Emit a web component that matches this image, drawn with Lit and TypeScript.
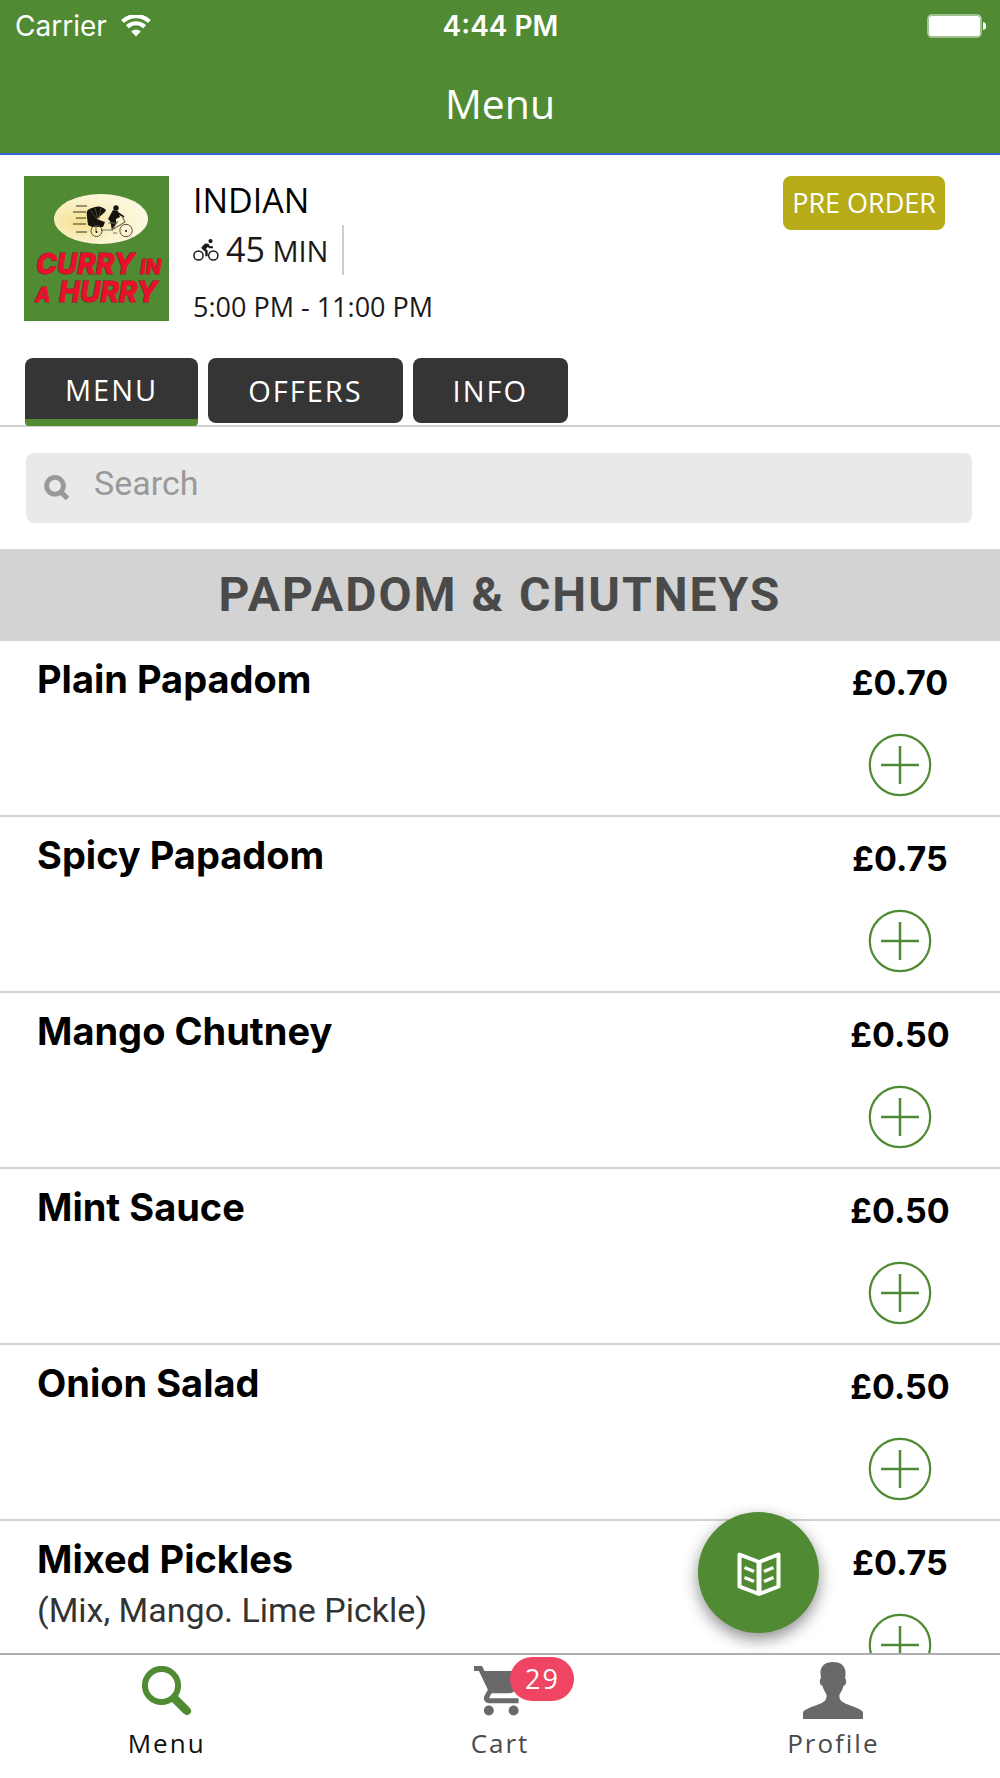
import { LitElement, html, css, svg, nothing } from "lit";
import { customElement, property, state } from "lit/decorators.js";

interface Dish {
  name: string;
  price: string;
  note?: string;
}

const dishes: Dish[] = [
  { name: "Plain Papadom", price: "£0.70" },
  { name: "Spicy Papadom", price: "£0.75" },
  { name: "Mango Chutney", price: "£0.50" },
  { name: "Mint Sauce", price: "£0.50" },
  { name: "Onion Salad", price: "£0.50" },
  { name: "Mixed Pickles", price: "£0.75", note: "(Mix, Mango. Lime Pickle)" },
];

@customElement("status-bar")
class StatusBar extends LitElement {
  static styles = css`
    :host {
      display: grid;
      grid-template-columns: 1fr auto 1fr;
      align-items: center;
      height: 51px;
      padding: 0 14px 0 15px;
      color: #fff;
      font-family: Inter, sans-serif;
      font-size: 28px;
      line-height: 34px;
    }
    .carrier {
      display: flex;
      align-items: center;
      gap: 14px;
    }
    .time {
      font-weight: 600;
    }
    .battery {
      justify-self: end;
    }
    svg {
      display: block;
    }
  `;

  render() {
    return html`
      <div class="carrier">
        <span>Carrier</span>
        <svg width="30" height="22" viewBox="0 0 30 22" aria-hidden="true">
          <path d="M1.600 6.600A19 19 0 0 1 28.400 6.600" fill="none" stroke="#fff" stroke-width="4.200" />
          <path d="M6.400 11.800A12.200 12.200 0 0 1 23.600 11.800" fill="none" stroke="#fff" stroke-width="4.200" />
          <path d="M10.200 16.400Q15 12.600 19.800 16.400L15 21.600Z" fill="#fff" />
        </svg>
      </div>
      <span class="time">4:44 PM</span>
      <svg class="battery" width="59" height="24" viewBox="0 0 59 24" aria-hidden="true">
        <rect x="1" y="1" width="53" height="22" rx="4" fill="none" stroke="#fff" stroke-opacity=".6" stroke-width="1.6" />
        <rect x="2" y="2" width="51" height="20" rx="2.500" fill="#fff" />
        <path d="M56 8Q59.400 8.800 59.400 12Q59.400 15.200 56 16Z" fill="#fff" />
      </svg>
    `;
  }
}

@customElement("restaurant-logo")
class RestaurantLogo extends LitElement {
  static styles = css`
    :host {
      display: block;
    }
    svg {
      display: block;
    }
    .word {
      font-family: Inter, sans-serif;
      font-weight: 800;
      font-style: italic;
      fill: #ea0f2c;
      stroke: #8f1a1c;
      stroke-width: 1px;
      paint-order: stroke;
    }
    .big {
      font-size: 28px;
    }
    .small {
      font-size: 20px;
    }
  `;

  render() {
    return html`
      <svg width="145" height="145" viewBox="0 0 145 145" role="img" aria-label="Curry in a Hurry">
        <defs>
          <radialGradient id="glow" cx=".28" cy=".55" r=".8">
            <stop offset="0" stop-color="#f3e08e" />
            <stop offset=".55" stop-color="#fbf3cf" />
            <stop offset="1" stop-color="#fdfae6" />
          </radialGradient>
        </defs>
        <rect width="145" height="145" fill="#508b33" />
        <ellipse cx="77" cy="43" rx="47" ry="25" fill="url(#glow)" />
        <path d="M52 30H63M49 36H62M52 42H62M49 48H62M52 56H63" stroke="#3b3524" stroke-width="1.2" />
        <path d="M63 41Q61 33 68 32Q76 28 82 34L81 36L73 43L78 45L81 46L79 51H68L64 49Z" fill="#15130f" />
        <path d="M66 34L73 43M71 32L74 43M77 32L75 43" stroke="#6f674c" stroke-width=".6" />
        <circle cx="92" cy="32" r="2.700" fill="#15130f" />
        <path d="M89 34L94 35L96 41L92 43L92 48L88 55L87 49L86 45L84 43Z" fill="#15130f" />
        <path d="M94 37L100 41" stroke="#15130f" stroke-width="1.6" />
        <path d="M77 54H88L101 46L98 40M88 54L94 45M72 50V56M84 47H91M89 57H93" fill="none" stroke="#77715c" stroke-width="1.2" />
        <g fill="none" stroke="#57523f" stroke-width="1">
          <circle cx="72.500" cy="55" r="5.500" />
          <circle cx="102" cy="54.500" r="6.200" />
        </g>
        <circle cx="72.500" cy="56" r="1" fill="#15130f" />
        <circle cx="102" cy="55" r="1" fill="#15130f" />
        <text class="word big" x="12" y="98">CURRY</text>
        <text class="word small" x="116" y="98">IN</text>
        <text class="word small" x="11" y="126">A</text>
        <text class="word big" x="35" y="126">HURRY</text>
      </svg>
    `;
  }
}

@customElement("restaurant-card")
class RestaurantCard extends LitElement {
  static styles = css`
    :host {
      display: flex;
      align-items: flex-start;
      gap: 24px;
      padding: 21px 55px 0 24px;
      font-family: "Open Sans", sans-serif;
      color: #1a1a1a;
    }
    .facts {
      flex: 1;
      display: flex;
      flex-direction: column;
      align-items: flex-start;
      height: 151px;
    }
    .cuisine {
      font-size: 34px;
      line-height: 49px;
      color: #000;
    }
    .delivery {
      display: flex;
      align-items: center;
      gap: 7px;
      height: 50px;
      padding-right: 14px;
      border-right: 2px solid #ccc;
      font-size: 29px;
      line-height: 46px;
    }
    .minutes {
      font-size: 34px;
    }
    .hours {
      margin-top: 12px;
      font-size: 27px;
      line-height: 40px;
    }
    .preorder {
      border: 0;
      border-radius: 8px;
      padding: 0 9px;
      background: #b7ac17;
      color: #fff;
      font: 27px/54px "Open Sans", sans-serif;
    }
  `;

  render() {
    return html`
      <restaurant-logo></restaurant-logo>
      <div class="facts">
        <span class="cuisine">INDIAN</span>
        <div class="delivery">
          <svg width="26" height="22" viewBox="0 0 26 22" aria-hidden="true">
            <g fill="none" stroke="#1a1a1a">
              <circle cx="5.500" cy="16.500" r="4.600" stroke-width="1.500" />
              <circle cx="20.300" cy="16.500" r="4.600" stroke-width="1.500" />
              <path d="M15 5.200L9.700 8.800L13.500 12.200V17.200" stroke-width="2.400" stroke-linejoin="round" />
              <path d="M14.500 5.200L16.500 8.300H20" stroke-width="2" />
              <path d="M14 5.800L11 8.800" stroke-width="4.400" />
            </g>
            <circle cx="17.500" cy="2.100" r="2.100" fill="#1a1a1a" />
          </svg>
          <span><span class="minutes">45</span> MIN</span>
        </div>
        <span class="hours">5:00 PM - 11:00 PM</span>
      </div>
      <button class="preorder" type="button">PRE ORDER</button>
    `;
  }
}

@customElement("section-tabs")
class SectionTabs extends LitElement {
  static styles = css`
    :host {
      display: block;
      padding: 31px 25px 0;
      border-bottom: 2px solid #d0d0d0;
    }
    .tabs {
      display: flex;
      align-items: flex-start;
      gap: 10px;
      height: 67px;
    }
    .tab {
      border: 0;
      border-radius: 8px;
      padding: 0 40px;
      background: #353535;
      color: #fff;
      font: 29px/65px "Open Sans", sans-serif;
      letter-spacing: 2px;
    }
    .tab.current {
      border-bottom: 7px solid #508b33;
      border-radius: 8px 8px 4px 4px;
      line-height: 60px;
      padding-top: 2px;
      height: 68px;
    }
  `;

  @state() current = "MENU";

  render() {
    return html`
      <nav class="tabs">
        ${["MENU", "OFFERS", "INFO"].map(
          (name) => html`<button
            type="button"
            class="tab ${name === this.current ? "current" : ""}"
            @click=${() => (this.current = name)}
          >${name}</button>`
        )}
      </nav>
    `;
  }
}

@customElement("search-box")
class SearchBox extends LitElement {
  static styles = css`
    :host {
      display: block;
      padding: 26px 28px 26px 26px;
    }
    .field {
      display: flex;
      align-items: center;
      gap: 24px;
      height: 70px;
      padding: 0 18px;
      border-radius: 8px;
      background: #e9e9e9;
    }
    .icon {
      flex: none;
    }
    .input {
      flex: 1;
      min-width: 0;
      height: 70px;
      box-sizing: border-box;
      border: 0;
      outline: 0;
      padding: 0 0 10px;
      background: transparent;
      color: #333;
      font: 34px/40px Roboto, sans-serif;
    }
    .input::placeholder {
      color: #999;
      opacity: 1;
    }
  `;

  render() {
    return html`
      <label class="field">
        <svg class="icon" width="26" height="26" viewBox="0 0 26 26" aria-hidden="true">
          <circle cx="11" cy="10.800" r="8.400" fill="none" stroke="#999" stroke-width="4.800" />
          <path d="M16.500 16.500L23.500 23.500" stroke="#999" stroke-width="5.200" />
        </svg>
        <input class="input" type="text" placeholder="Search" aria-label="Search" />
      </label>
    `;
  }
}

@customElement("dish-row")
class DishRow extends LitElement {
  static styles = css`
    :host {
      display: flex;
      justify-content: space-between;
      box-sizing: border-box;
      height: 176px;
      padding: 15px 38px 0 37px;
      border-bottom: 2px solid #d0d0d0;
    }
    .name {
      margin: 0;
      font: 700 38px/46px Inter, sans-serif;
      color: #000;
    }
    .note {
      margin: 6px 0 0;
      font: 34px/44px Roboto, sans-serif;
      color: #333;
    }
    .buy {
      display: flex;
      flex-direction: column;
      align-items: center;
      width: 124px;
      padding-top: 6px;
    }
    .price {
      font: 700 34px/42px Inter, sans-serif;
      color: #000;
    }
    .add {
      margin-top: 29px;
      padding: 0;
      border: 0;
      background: none;
    }
    .add svg {
      display: block;
    }
  `;

  @property({ attribute: false }) dish!: Dish;

  render() {
    return html`
      <div>
        <h3 class="name">${this.dish.name}</h3>
        ${this.dish.note ? html`<p class="note">${this.dish.note}</p>` : nothing}
      </div>
      <div class="buy">
        <span class="price">${this.dish.price}</span>
        <button class="add" type="button" aria-label="Add ${this.dish.name}">
          <svg width="64" height="64" viewBox="0 0 64 64" fill="none" stroke="#508b33" aria-hidden="true">
            <circle cx="32" cy="32" r="30.200" stroke-width="2.200" />
            <path d="M32 13V51M13 32H51" stroke-width="2.500" />
          </svg>
        </button>
      </div>
    `;
  }
}

const tabIcons = {
  menu: svg`<svg width="50" height="50" viewBox="0 0 50 50" aria-hidden="true">
    <circle cx="19.500" cy="19.500" r="16.600" fill="none" stroke="#508b33" stroke-width="6" />
    <path d="M31.500 31.500L44.500 44.500" stroke="#508b33" stroke-width="8.500" />
    <path d="M43 43L45 45" stroke="#508b33" stroke-width="8" stroke-linecap="round" />
  </svg>`,
  cart: svg`<svg width="52" height="52" viewBox="1 1.600 21 21" fill="#696969" aria-hidden="true">
    <path d="M7 18c-1.100 0-1.990.9-1.990 2S5.900 22 7 22s2-.9 2-2-.9-2-2-2zM1 2v2h2l3.600 7.590-1.350 2.450c-.16.280-.25.610-.25.960 0 1.100.9 2 2 2h12v-2H7.420c-.14 0-.25-.11-.25-.25l.03-.12.900-1.630h7.450c.75 0 1.410-.41 1.750-1.030l3.580-6.490c.08-.14.120-.31.120-.48 0-.55-.45-1-1-1H5.210l-.94-2H1zm16 16c-1.100 0-1.990.9-1.990 2s.89 2 1.990 2 2-.9 2-2-.9-2-2-2z" />
  </svg>`,
  profile: svg`<svg width="60" height="57" viewBox="0 0 60 57" fill="#696969" aria-hidden="true">
    <path d="M30 0C21.500 0 17 4.500 17.500 12L18 16.500C16.800 17 16.500 18.500 17 21C17.400 22.800 18.500 23.600 19.500 24C20.500 28 22.500 30.500 23.500 32.500C24 36 23 38.500 19.500 40.500C14 43.500 2 46.500 0 50V57H60V50C58 46.500 46 43.500 40.500 40.500C37 38.500 36 36 36.500 32.500C37.500 30.500 39.500 28 40.500 24C41.500 23.600 42.600 22.800 43 21C43.500 18.500 43.200 17 42 16.500L42.500 12C43 4.500 38.500 0 30 0Z" />
  </svg>`,
};

@customElement("tab-bar")
class TabBar extends LitElement {
  static styles = css`
    :host {
      display: grid;
      grid-template-columns: repeat(3, 1fr);
      height: 123px;
      border-top: 2px solid #aeaeae;
      background: #fff;
    }
    .item {
      display: flex;
      flex-direction: column;
      align-items: center;
      color: #4a4a4a;
      text-decoration: none;
      font: 26px/34px "Open Sans", sans-serif;
      letter-spacing: 2px;
    }
    .item.current {
      color: #111;
      font-weight: 500;
    }
    .icon {
      position: relative;
      display: flex;
      align-items: center;
      height: 71px;
    }
    .badge {
      position: absolute;
      left: 36px;
      top: 2px;
      padding: 0 14px 0 15px;
      border-radius: 22px;
      background: #ef4563;
      color: #fff;
      font-size: 27px;
      line-height: 44px;
    }
  `;

  render() {
    return html`
      <a class="item current" href="#menu"><span class="icon">${tabIcons.menu}</span>Menu</a>
      <a class="item" href="#cart"><span class="icon">${tabIcons.cart}<span class="badge">29</span></span>Cart</a>
      <a class="item" href="#profile"><span class="icon">${tabIcons.profile}</span>Profile</a>
    `;
  }
}

@customElement("app-root")
class AppRoot extends LitElement {
  static styles = css`
    :host {
      display: flex;
      flex-direction: column;
      position: relative;
      height: 100vh;
      overflow: hidden;
      background: #fff;
    }
    .header {
      flex: none;
      background: #508b33;
      border-bottom: 2px solid #3a66cf;
    }
    .title {
      margin: 0;
      height: 102px;
      color: #fff;
      text-align: center;
      font: 41px/104px "Open Sans", sans-serif;
    }
    .content {
      flex: 1;
      min-height: 0;
      overflow-y: auto;
      scrollbar-width: none;
    }
    .category {
      margin: 0;
      background: #d3d3d3;
      color: #4a4a4a;
      text-align: center;
      font: 700 48px/92px Roboto, sans-serif;
      letter-spacing: 2px;
    }
    .fab {
      position: absolute;
      right: 181px;
      bottom: 145px;
      display: flex;
      align-items: center;
      justify-content: center;
      width: 121px;
      height: 121px;
      padding: 2px 0 0;
      border: 0;
      border-radius: 50%;
      background: #508b33;
      box-shadow: 0 6px 16px rgba(0, 0, 0, 0.45);
    }
    .bottom {
      flex: none;
      position: relative;
    }
  `;

  render() {
    return html`
      <header class="header">
        <status-bar></status-bar>
        <h1 class="title">Menu</h1>
      </header>
      <main class="content">
        <restaurant-card></restaurant-card>
        <section-tabs></section-tabs>
        <search-box></search-box>
        <h2 class="category">PAPADOM &amp; CHUTNEYS</h2>
        ${dishes.map((dish) => html`<dish-row .dish=${dish}></dish-row>`)}
      </main>
      <button class="fab" type="button" aria-label="Menu categories">
        <svg width="44" height="44" viewBox="0 0 44 44" fill="none" stroke="#fff" aria-hidden="true">
          <path d="M2.500 2.500L22 10L41.500 2.500V34.500L22 42L2.500 34.500Z" stroke-width="4" stroke-linejoin="round" />
          <path d="M22 9V42" stroke-width="5" />
          <path d="M7.500 15.500L17 19.500M7.500 25.500L17 29.500M36.500 15.500L27 19.500M36.500 25.500L27 29.500" stroke-width="3.400" />
        </svg>
      </button>
      <tab-bar class="bottom"></tab-bar>
    `;
  }
}
